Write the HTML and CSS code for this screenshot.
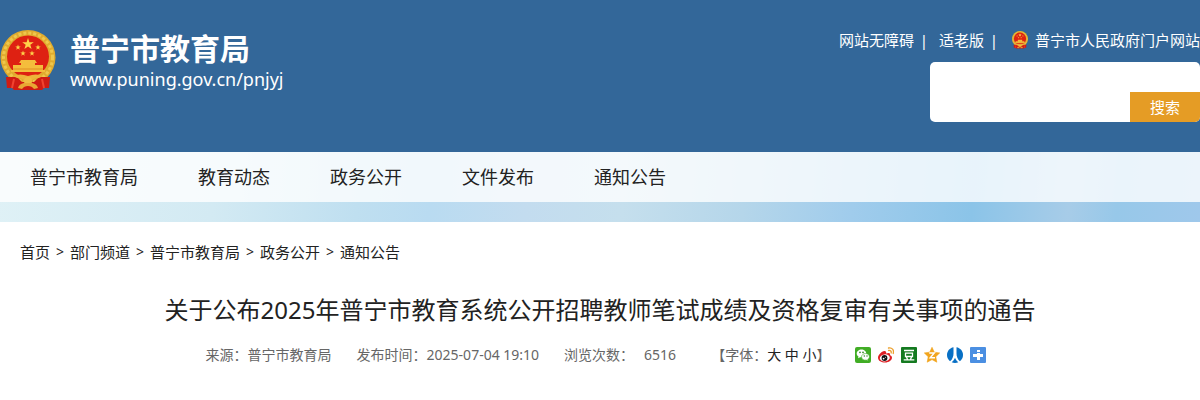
FILE: index.html
```
<!DOCTYPE html>
<html lang="zh-CN">

<head>
	<meta charset="UTF-8">
	<title>普宁市教育局</title>
	<link rel="stylesheet" href="styles.css">
</head>

<body>
	<svg class="sprite" aria-hidden="true">
		<symbol id="emblem" viewBox="0 0 56 62">
			<circle cx="28" cy="27.500" r="27.500" fill="#e0ab2e" />
			<circle cx="28" cy="27.500" r="24.500" fill="none" stroke="#efc74c" stroke-width="3" stroke-dasharray="3 2" />
			<circle cx="28" cy="26.500" r="21" fill="#de2112" />
			<path d="M28 8 L29.400 12.200 H33.800 L30.300 14.800 L31.600 19 L28 16.400 L24.400 19 L25.700 14.800 L22.200 12.200 H26.600 Z" fill="#ffd34a" />
			<path id="small-star" d="M18 14.500 L18.700 16.400 H20.700 L19.100 17.700 L19.700 19.700 L18 18.500 L16.300 19.700 L16.900 17.700 L15.300 16.400 H17.300 Z" fill="#ffd34a" />
			<use href="#small-star" x="20" />
			<use href="#small-star" x="5" y="6" />
			<use href="#small-star" x="14" y="6" />
			<path d="M21 30 H35 L37 33 H35 V35 H43 V40 H45 V42 H11 V40 H13 V35 H21 V33 H19 Z" fill="#f4bd3c" />
			<path d="M13 39 H43" stroke="#e08f25" />
			<path d="M6 47 H17 L22 52 H34 L39 47 H50 L49 58 H44 L42 60 H14 L12 58 H7 Z" fill="#cf1c13" />
			<path d="M13 46 Q20 43 28 46 Q36 43 43 46 L39 48 Q34 48 32 50 H24 Q22 48 17 48 Z" fill="#edb33a" />
			<circle cx="28" cy="51" r="4" fill="#f0bd42" />
			<path d="M18 58 Q19 54 24 53 H32 Q37 54 38 58 L34 59 Q32 56 28 56 Q24 56 22 59 Z" fill="#e8a834" />
			<path d="M14 49 L12 58 M42 49 L44 58" stroke="#f04430" stroke-width="2" />
		</symbol>
	</svg>

	<header class="header">
		<a class="logo" href="#">
			<svg class="logo-emblem" aria-hidden="true"><use href="#emblem" /></svg>
			<span class="logo-text">
				<strong class="logo-name">普宁市教育局</strong>
				<span class="logo-url">www.puning.gov.cn/pnjyj</span>
			</span>
		</a>
		<div class="tools">
			<div class="top-links">
				<a href="#">网站无障碍</a>
				<span class="bar">|</span>
				<a href="#">适老版</a>
				<span class="bar">|</span>
				<a class="portal" href="#"><svg class="portal-emblem" aria-hidden="true"><use href="#emblem" /></svg>普宁市人民政府门户网站</a>
			</div>
			<form class="search">
				<input class="search-input" type="text" aria-label="搜索">
				<button class="search-button" type="submit">搜索</button>
			</form>
		</div>
	</header>

	<div class="sky">
		<nav class="nav">
			<a href="#">普宁市教育局</a>
			<a href="#">教育动态</a>
			<a href="#">政务公开</a>
			<a href="#">文件发布</a>
			<a href="#">通知公告</a>
		</nav>
	</div>

	<nav class="crumbs">
		<a href="#">首页</a><span class="sep">&gt;</span>
		<a href="#">部门频道</a><span class="sep">&gt;</span>
		<a href="#">普宁市教育局</a><span class="sep">&gt;</span>
		<a href="#">政务公开</a><span class="sep">&gt;</span>
		<a href="#">通知公告</a>
	</nav>

	<main class="article">
		<h1 class="title">关于公布2025年普宁市教育系统公开招聘教师笔试成绩及资格复审有关事项的通告</h1>
		<div class="meta">
			<span>来源：普宁市教育局</span>
			<span>发布时间：2025-07-04 19:10</span>
			<span class="views"><span>浏览次数：</span><span>6516</span></span>
			<span class="font-size">【字体：<a href="#">大</a> <a href="#">中</a> <a href="#">小</a>】</span>
			<div class="share">
				<a href="#" aria-label="微信">
					<svg viewBox="0 0 16 16">
						<rect width="16" height="16" rx="2" fill="#41ad25" />
						<path d="M6.500 2.500 C4 2.500 1.700 4.300 1.700 6.500 C1.700 7.800 2.400 8.800 3.500 9.500 L3 11.200 L5.100 10.200 C8.200 10.800 11.300 9 11.300 6.500 C11.300 4.300 9 2.500 6.500 2.500 Z" fill="#fff" />
						<path d="M10.600 6.500 C8.400 6.500 6.500 8 6.500 9.900 C6.500 12.200 9 13.500 11.300 13.100 L13.200 14 L12.700 12.500 C16 10.500 14.300 6.500 10.600 6.500 Z" fill="#fff" stroke="#41ad25" stroke-width=".6" />
						<g fill="#287d15">
							<circle cx="5" cy="5.400" r=".8" />
							<circle cx="8" cy="5.400" r=".8" />
							<circle cx="9.300" cy="9" r=".7" />
							<circle cx="12" cy="9" r=".7" />
						</g>
					</svg>
				</a>
				<a href="#" aria-label="新浪微博">
					<svg viewBox="0 0 16 16">
						<path d="M6.300 4 C3.600 4.300 0 7.900 0 10.700 C0 13.800 3.500 15.500 7 15.500 C11 15.500 14 13 14 10.700 C14 9.200 12.900 8.500 12 8.200 C12.600 6 11 5.500 8.100 6.600 C8.500 5 7.800 3.800 6.300 4 Z" fill="#df2024" />
						<ellipse cx="6.800" cy="10.900" rx="5" ry="3.500" transform="rotate(-8 6.800 10.900)" fill="#fff" />
						<circle cx="6.500" cy="11" r="2.900" fill="#111" />
						<circle cx="5.600" cy="11.600" r=".9" fill="#fff" />
						<circle cx="7.400" cy="10.300" r=".5" fill="#fff" />
						<path d="M10.500 1 C14 .2 16.300 3 15.200 6.500 M10.600 3.500 C12.500 3.200 13.700 4.300 13.100 6" fill="none" stroke="#eca02d" stroke-width="1.300" stroke-linecap="round" />
					</svg>
				</a>
				<a href="#" aria-label="豆瓣">
					<svg viewBox="0 0 16 16">
						<rect width="16" height="16" rx="1" fill="#147a20" />
						<path d="M3 3.500 H13 M4.500 6.200 H11.500 V9.500 H4.500 Z M5.500 10 L6.500 12.500 M10.500 10 L9.500 12.500 M2.700 12.800 H13.300" fill="none" stroke="#fff" stroke-width="1.300" />
					</svg>
				</a>
				<a href="#" aria-label="QQ空间">
					<svg viewBox="0 0 16 16">
						<path d="M8 .3 L10.300 5.200 L15.700 5.900 L11.800 9.700 L12.800 15.200 L8 12.600 L3.200 15.200 L4.200 9.700 L.3 5.900 L5.700 5.200 Z" fill="#f2a51d" stroke="#f2a51d" stroke-width=".6" stroke-linejoin="round" />
						<path d="M5.200 6 H10.300 L6.200 10.800 H11" fill="none" stroke="#fff" stroke-width="1.400" />
					</svg>
				</a>
				<a href="#" aria-label="人人网">
					<svg viewBox="0 0 16 16">
						<path d="M6.500 .2 C2.800 .8 0 4 0 8 C0 10.600 1.200 12.900 3.100 14.300 C5.400 12.500 6.500 9.500 6.500 6.500 Z" fill="#0870c5" />
						<path d="M9.500 .2 C13.200 .8 16 4 16 8 C16 10.600 14.800 12.900 12.900 14.300 C10.600 12.500 9.500 9.500 9.500 6.500 Z" fill="#0870c5" />
						<path d="M8 10.800 C7.300 12.700 6.200 14.200 4.700 15.300 C6.700 16.200 9.300 16.200 11.300 15.300 C9.800 14.200 8.700 12.700 8 10.800 Z" fill="#0870c5" />
					</svg>
				</a>
				<a href="#" aria-label="更多分享">
					<svg viewBox="0 0 16 16">
						<rect width="16" height="16" rx="1" fill="#4b8fe2" />
						<path d="M7 3 H10 V5 H7 Z M7 6 H10 V7 H13 V10 H10 V13 H7 V10 H3 V7 H7 Z" fill="#fff" />
					</svg>
				</a>
			</div>
		</div>
	</main>
</body>

</html>
```
FILE: styles.css
```
body {
	margin: 0;
	background: #fff;
	color: #222;
	font-family: "Noto Sans", "Noto Sans CJK SC", sans-serif;
	font-size: 15px;
	line-height: 20px;
}

a {
	color: inherit;
	text-decoration: none;
}

.sprite {
	display: none;
}

.header {
	display: flex;
	justify-content: space-between;
	padding: 30px 0;
	background: #336799;
	color: #fff;
}

.logo {
	display: flex;
	align-items: flex-start;
	gap: 14px;
}

.logo-emblem {
	width: 56px;
	height: 62px;
}

.logo-text {
	display: flex;
	flex-direction: column;
}

.logo-name {
	font-size: 30px;
	line-height: 38px;
}

.logo-url {
	font-size: 18px;
	line-height: 22px;
}

.tools {
	display: flex;
	flex-direction: column;
	align-items: flex-end;
	gap: 12px;
}

.top-links {
	display: flex;
	line-height: 20px;
}

.bar {
	width: 20px;
	margin-right: 5px;
	text-align: center;
}

.portal {
	display: flex;
	align-items: center;
	gap: 5px;
	margin-left: 1px;
}

.portal-emblem {
	width: 20px;
	height: 18px;
}

.search {
	display: flex;
	align-items: flex-end;
	width: 270px;
	border-radius: 5px;
	background: #fff;
	overflow: hidden;
}

.search-input {
	flex: 1;
	min-width: 0;
	height: 60px;
	padding: 0 10px;
	border: 0;
	box-sizing: border-box;
	background: transparent;
	font: inherit;
	outline: none;
}

.search-button {
	width: 70px;
	height: 30px;
	padding: 0;
	border: 0;
	background: #e59c25;
	color: #fff;
	font: inherit;
	cursor: pointer;
}

.sky {
	padding-bottom: 20px;
	background: linear-gradient(95deg, #dff1f6 0%, #d3eaf3 18%, #bfdff0 30%, #b9dbf1 36%, #c3dcef 44%, #c5dfed 52%, #b5d6ea 62%, #a0ccec 71%, #8bc4e8 81%, #a7cce8 89%, #97c8e9 93%, #9fc8eb 100%);
}

.nav {
	display: flex;
	height: 50px;
	background: rgba(255, 255, 255, 0.8);
	font-size: 18px;
	line-height: 50px;
}

.nav a {
	padding: 0 30px;
}

.nav a:hover {
	color: #336799;
}

.crumbs {
	display: flex;
	padding: 20px;
}

.sep {
	width: 20px;
	font-size: 14px;
	text-align: center;
}

.article {
	padding: 0 20px;
}

.title {
	margin: 10px 0 17px;
	font-size: 24px;
	font-weight: 400;
	line-height: 36px;
	text-align: center;
}

.meta {
	display: flex;
	justify-content: center;
	align-items: center;
	gap: 25px;
	margin-right: 8px;
	color: #666;
	font-size: 14px;
}

.views {
	display: flex;
	gap: 10px;
	margin-right: 10px;
}

.font-size a {
	color: #222;
}

.share {
	display: flex;
	gap: 7px;
}

.share svg {
	display: block;
	width: 16px;
	height: 16px;
}
```
